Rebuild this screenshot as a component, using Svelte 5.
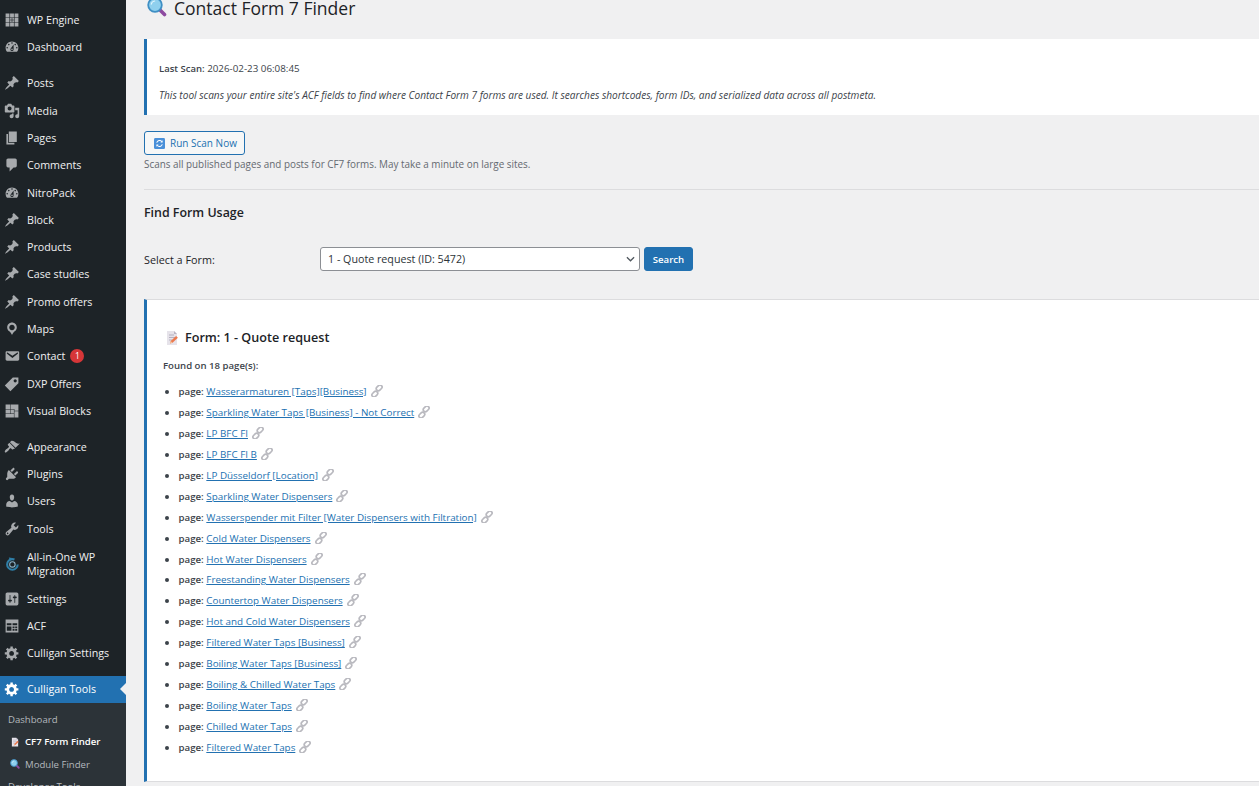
<script>
  const P = {
    pin: 'M10.44 3.02l1.82-1.82 6.36 6.35-1.83 1.82c-1.05-.68-2.48-.57-3.41.36l-.75.75c-.92.93-1.04 2.35-.35 3.41l-1.83 1.82-2.41-2.41-2.8 2.79c-.42.42-3.38 2.71-3.8 2.29s1.86-3.39 2.28-3.81l2.79-2.79L4.1 9.36l1.83-1.82c1.05.69 2.48.57 3.4-.36l.75-.75c.93-.92 1.05-2.35.36-3.41z',
    media: 'M13 11V4c0-.55-.45-1-1-1h-1.67L9 1H5L3.67 3H2c-.55 0-1 .45-1 1v7c0 .55.45 1 1 1h10c.55 0 1-.45 1-1zM7 4.5c1.38 0 2.5 1.12 2.5 2.5S8.38 9.5 7 9.5 4.5 8.38 4.5 7 5.62 4.5 7 4.5zM14 6h5v10.5c0 1.38-1.12 2.5-2.5 2.5S14 17.88 14 16.5s1.12-2.5 2.5-2.5c.17 0 .34.02.5.05V9h-3V6zm-4 8.05V13h2v3.5c0 1.38-1.12 2.5-2.5 2.5S7 17.88 7 16.5 8.12 14 9.5 14c.17 0 .34.02.5.05z',
    page: 'M6 15V2h10v13H6zm-1 1h8v2H3V5h2v11z',
    comment: 'M5 2h9c1.1 0 2 .9 2 2v7c0 1.1-.9 2-2 2h-2l-5 5v-5H5c-1.1 0-2-.9-2-2V4c0-1.1.9-2 2-2z',
    dash: 'M3.76 16h12.48c1.1-1.37 1.76-3.11 1.76-5 0-4.42-3.58-8-8-8s-8 3.58-8 8c0 1.89.66 3.63 1.76 5zM10 4c.55 0 1 .45 1 1s-.45 1-1 1-1-.45-1-1 .45-1 1-1zM6 6c.55 0 1 .45 1 1s-.45 1-1 1-1-.45-1-1 .45-1 1-1zm8 0c.55 0 1 .45 1 1s-.45 1-1 1-1-.45-1-1 .45-1 1-1zm-5.37 5.55L12 7v6c0 1.1-.9 2-2 2s-2-.9-2-2c0-.57.24-1.08.63-1.45zM4 10c.55 0 1 .45 1 1s-.45 1-1 1-1-.45-1-1 .45-1 1-1zm12 0c.55 0 1 .45 1 1s-.45 1-1 1-1-.45-1-1 .45-1 1-1zm-5 3c0-.55-.45-1-1-1s-1 .45-1 1 .45 1 1 1 1-.45 1-1z',
    loc: 'M10 2C6.69 2 4 4.69 4 8c0 2.02 1.17 3.71 2.53 4.89.43.37 1.18.96 1.85 1.83.74.97 1.41 2.01 1.62 2.71.21-.7.88-1.74 1.62-2.71.67-.87 1.42-1.46 1.85-1.83C14.83 11.71 16 10.02 16 8c0-3.31-2.69-6-6-6zm0 2.56c1.9 0 3.44 1.54 3.44 3.44S11.9 11.44 10 11.44 6.56 9.9 6.56 8 8.1 4.56 10 4.56z',
    mail: 'M3.87 4h13.25C18.37 4 19 4.59 19 5.79v8.42c0 1.19-.63 1.79-1.88 1.79H3.87c-1.25 0-1.88-.6-1.88-1.79V5.79c0-1.2.63-1.79 1.88-1.79zm6.62 8.6l6.74-5.53c.24-.2.43-.66.13-1.07-.29-.41-.82-.42-1.17-.17l-5.7 3.86L4.8 5.83c-.35-.25-.88-.24-1.17.17-.3.41-.11.87.13 1.07z',
    tag: 'M11 2h7v7L8 19l-7-7zm3 6c1.1 0 2-.9 2-2s-.9-2-2-2-2 .9-2 2 .9 2 2 2z',
    brush: 'M14.48 11.06L7.41 3.99l1.5-1.5c.5-.56 2.3-.47 3.51.32 1.21.8 1.43 1.28 2.91 2.1 1.18.64 2.45 1.26 4.45.85zm-.71.71L6.7 4.7 4.93 6.47c-.39.39-.39 1.02 0 1.41l1.06 1.06c.39.39.39 1.03 0 1.42-.6.6-1.43 1.11-2.21 1.69-.35.26-.7.53-1.01.84-1.34 1.34-2.37 2.92-1.58 3.71.79.76 2.37-.27 3.72-1.62.31-.31.58-.66.84-1.01.58-.78 1.09-1.61 1.69-2.21.39-.39 1.03-.39 1.42 0l1.06 1.06c.39.39 1.02.39 1.41 0z',
    plug: 'M13.11 4.36L9.87 7.6 8 5.73l3.24-3.24c.35-.34 1.05-.2 1.56.32.52.51.66 1.21.31 1.55zm-8 1.77l.91-1.12 9.01 9.01-1.19.84c-.71.71-2.63 1.16-3.82 1.16H6.14L4.9 17.26c-.59.59-1.54.59-2.12 0-.59-.58-.59-1.53 0-2.12l1.24-1.24v-3.88c0-1.13.4-3.19 1.09-3.89zm7.26 3.97l3.24-3.24c.34-.35 1.04-.21 1.55.31.52.51.66 1.21.31 1.55l-3.24 3.25z',
    user: 'M10 9.25c-2.27 0-2.73-3.44-2.73-3.44C7 4.02 7.82 2 9.97 2c2.16 0 2.98 2.02 2.71 3.81 0 0-.41 3.44-2.68 3.44zm0 2.57L12.72 10c2.39 0 4.52 2.33 4.52 4.53v2.49s-3.65 1.13-7.24 1.13c-3.65 0-7.24-1.13-7.24-1.13v-2.49c0-2.25 1.94-4.48 4.47-4.48z',
    tool: 'M16.68 9.77c-1.34 1.34-3.3 1.67-4.95.99l-5.41 6.52c-.99.99-2.59.99-3.58 0s-.99-2.59 0-3.57l6.52-5.42c-.68-1.65-.35-3.61.99-4.95 1.28-1.28 3.12-1.62 4.72-1.06l-2.89 2.89 2.82 2.82 2.86-2.87c.53 1.58.18 3.39-1.08 4.67zM3.81 16.21c.4.39 1.04.39 1.43 0 .4-.4.4-1.04 0-1.43-.39-.4-1.03-.4-1.43 0-.39.39-.39 1.03 0 1.43z',
    set: 'M18 16V4c0-1.1-.9-2-2-2H4c-1.1 0-2 .9-2 2v12c0 1.1.9 2 2 2h12c1.1 0 2-.9 2-2zM8 11h1c.55 0 1 .45 1 1s-.45 1-1 1H8v1.5c0 .28-.22.5-.5.5s-.5-.22-.5-.5V13H6c-.55 0-1-.45-1-1s.45-1 1-1h1V5.5c0-.28.22-.5.5-.5s.5.22.5.5V11zm5-2h-1c-.55 0-1-.45-1-1s.45-1 1-1h1V5.5c0-.28.22-.5.5-.5s.5.22.5.5V7h1c.55 0 1 .45 1 1s-.45 1-1 1h-1v5.5c0 .28-.22.5-.5.5s-.5-.22-.5-.5V9z',
    gear: 'M18 12h-2.18c-.17.7-.44 1.35-.81 1.93l1.54 1.54-2.1 2.1-1.54-1.54c-.58.36-1.23.63-1.91.79V19H8v-2.18c-.68-.16-1.33-.43-1.91-.79l-1.54 1.54-2.12-2.12 1.54-1.54c-.36-.58-.63-1.23-.79-1.91H1V9.03h2.17c.16-.7.44-1.35.8-1.94L2.43 5.55l2.1-2.1 1.54 1.54c.58-.37 1.24-.64 1.93-.81V2h3v2.18c.68.16 1.33.43 1.91.79l1.54-1.54 2.12 2.12-1.54 1.54c.36.59.64 1.24.8 1.94H18V12zm-8.5 1.5c1.66 0 3-1.34 3-3s-1.34-3-3-3-3 1.34-3 3 1.34 3 3 3z',
    wpe: 'M2 2h4.8v4.8H2zM7.6 2h4.8v4.8H7.6zM13.2 2H18v4.8h-4.8zM2 7.6h4.8v4.8H2zM13.2 7.6H18v4.8h-4.8zM2 13.2h4.8V18H2zM7.6 13.2h4.8V18H7.6zM13.2 13.2H18V18h-4.8zM7.6 7.6h2v2h-2zM10.4 7.6h2v2h-2zM7.6 10.4h2v2h-2zM10.4 10.4h2v2h-2z',
    blocks: 'M2 2h5.6v5.6H2zM8.2 2H18v7.6h-5V7.6H8.2zM2 8.2h5.6v5H2zM8.2 8.2h4.2v5H8.2zM13 10.2h5V18h-5zM2 13.8h10.4V18H2z',
    acf: 'M2 2h16v16H2zM3.5 6.5v2.6h5.8V6.5zM10.7 6.5v2.6h5.8V6.5zM3.5 10.5v5.5h5.8v-5.5zM10.7 10.5v2.2h2.5v-2.2zM14 10.5v2.2h2.5v-2.2zM10.7 13.8V16h2.5v-2.2zM14 13.8V16h2.5v-2.2z'
  };

  const groups = [
    [['WP Engine','wpe'],['Dashboard','dash']],
    [['Posts','pin'],['Media','media'],['Pages','page'],['Comments','comment'],['NitroPack','dash'],['Block','pin'],['Products','pin'],['Case studies','pin'],['Promo offers','pin'],['Maps','loc'],['Contact','mail',1],['DXP Offers','tag'],['Visual Blocks','blocks']],
    [['Appearance','brush'],['Plugins','plug'],['Users','user'],['Tools','tool'],['All-in-One WP Migration','aio'],['Settings','set'],['ACF','acf'],['Culligan Settings','gear']]
  ];

  const pages = [
    ['Wasserarmaturen [Taps][Business]'],['Sparkling Water Taps [Business] - Not Correct'],['LP BFC FI'],['LP BFC FI B'],['LP Düsseldorf [Location]'],['Sparkling Water Dispensers'],['Wasserspender mit Filter [Water Dispensers with Filtration]'],['Cold Water Dispensers'],['Hot Water Dispensers'],['Freestanding Water Dispensers'],['Countertop Water Dispensers'],['Hot and Cold Water Dispensers'],['Filtered Water Taps [Business]'],['Boiling Water Taps [Business]'],['Boiling & Chilled Water Taps'],['Boiling Water Taps'],['Chilled Water Taps'],['Filtered Water Taps']
  ];
</script>

{#snippet memo(cls)}
  <svg class={cls} viewBox="0 0 16 16" aria-hidden="true">
    <path d="M3 1h7l3 3v11H3z" fill="#e6e3ea"/><path d="M10 1l3 3h-3z" fill="#b9b4c2"/>
    <path d="M5 5h5M5 7.5h6M5 10h3" stroke="#a9a5b5" stroke-width=".8"/>
    <path d="M6 13.4l.7-2.4 5.4-5 1.8 1.8-5.4 5z" fill="#ec7a4e"/><path d="M6 13.4l.7-2.4 1.7 1.7z" fill="#f6c8a0"/>
  </svg>
{/snippet}

{#snippet lens(cls)}
  <svg class={cls} viewBox="0 0 20 20" aria-hidden="true">
    <path d="M12.5 12.5l5 5" stroke="#8d4aa0" stroke-width="3.6" stroke-linecap="round"/>
    <circle cx="8" cy="8" r="6.8" fill="#8fd0ee" stroke="#3f8fc4" stroke-width="1.8"/>
    <path d="M4.3 7.2A4 4 0 0 1 7.6 4" stroke="#dff4fd" stroke-width="1.2" fill="none" stroke-linecap="round"/>
  </svg>
{/snippet}

<div class="root">
  <nav class="side">
    {#each groups as g}
      <ul class="group">
        {#each g as [label, icon, badge]}
          <li class="item" class:tall={icon === 'aio'}>
            {#if icon === 'aio'}
              <svg class="ico" viewBox="0 0 20 20" aria-hidden="true">
                <circle cx="10.5" cy="10.5" r="6.6" fill="none" stroke="#2f7fa8" stroke-width="2.6" stroke-dasharray="33 10"/>
                <circle cx="10.5" cy="10.5" r="3.4" fill="none" stroke="#8fb7cc" stroke-width="1.3"/>
                <path d="M6 1.8l4.2.8-2.6 3.4z" fill="#2f7fa8"/>
              </svg>
            {:else}
              <svg class="ico" viewBox="0 0 20 20" aria-hidden="true"><path d={P[icon]} fill-rule="evenodd"/></svg>
            {/if}
            <span class="lbl">{label}</span>
            {#if badge}<span class="badge">{badge}</span>{/if}
          </li>
        {/each}
      </ul>
    {/each}
    <div class="active">
      <svg class="ico" viewBox="0 0 20 20" aria-hidden="true"><path d={P.gear} fill-rule="evenodd"/></svg>
      <span class="lbl">Culligan Tools</span>
    </div>
    <ul class="sub">
      <li class="subhead">Dashboard</li>
      <li class="subitem cur">{@render memo('subico')}CF7 Form Finder</li>
      <li class="subitem">{@render lens('subico')}Module Finder</li>
      <li class="subhead">Developer Tools</li>
    </ul>
  </nav>

  <main class="main">
    <h1>{@render lens('h1ico')}<span>Contact Form 7 Finder</span></h1>

    <section class="notice">
      <p class="scan"><strong>Last Scan:</strong> 2026-02-23 06:08:45</p>
      <p class="desc">This tool scans your entire site's ACF fields to find where Contact Form 7 forms are used. It searches shortcodes, form IDs, and serialized data across all postmeta.</p>
    </section>

    <button class="run">
      <svg class="runico" viewBox="0 0 12 12" aria-hidden="true">
        <rect width="12" height="12" rx="1.5" fill="#4a90d9"/>
        <path d="M3 5.2A3.1 3.1 0 0 1 8.6 4M9 6.8A3.1 3.1 0 0 1 3.4 8" fill="none" stroke="#fff" stroke-width="1.1"/>
        <path d="M9.4 2.4v2.4H7zM2.6 9.6V7.2H5z" fill="#fff"/>
      </svg>
      Run Scan Now
    </button>
    <p class="help">Scans all published pages and posts for CF7 forms. May take a minute on large sites.</p>

    <hr />

    <h2>Find Form Usage</h2>

    <form class="row" onsubmit={(e) => e.preventDefault()}>
      <label for="form-select">Select a Form:</label>
      <select id="form-select"><option>1 - Quote request (ID: 5472)</option></select>
      <button class="search" type="submit">Search</button>
    </form>

    <section class="result">
      <h3>{@render memo('h3ico')}Form: 1 - Quote request</h3>
      <p class="found"><strong>Found on 18 page(s):</strong></p>
      <ul class="list">
        {#each pages as [name]}
          <li>
            <strong>page:</strong> <a href="#top" onclick={(e) => e.preventDefault()}>{name}</a>
            <svg class="link" viewBox="0 0 16 16" aria-hidden="true">
              <g fill="none" stroke="#b9b9bf" stroke-width="2.2">
                <rect x="6.6" y="1" width="8.6" height="5.6" rx="2.8" transform="rotate(-45 10.9 3.8)"/>
                <rect x="0.8" y="9.4" width="8.6" height="5.6" rx="2.8" transform="rotate(-45 5.1 12.2)"/>
              </g>
            </svg>
          </li>
        {/each}
      </ul>
    </section>
  </main>
</div>

<style>
  :global(body) { margin: 0; background: #f0f0f1; }
  :global(html, body) { overflow: hidden; }
  .root {
    display: grid;
    grid-template-columns: 126px 1fr;
    height: 786px;
    overflow: hidden;
    font-family: "Open Sans", "Noto Sans", sans-serif;
    font-size: 10px;
    color: #3c434a;
    background: #f0f0f1;
  }
  ul { list-style: none; margin: 0; padding: 0; }
  p { margin: 0; }

  .side { background: #1d2327; color: #f0f0f1; padding-top: 6.5px; overflow: hidden; }
  .group { margin-bottom: 8.6px; }
  .item, .active {
    display: flex;
    align-items: center;
    height: 27.3px;
    font-size: 10.7px;
    line-height: 14px;
  }
  .item.tall { height: 42.7px; }
  .ico { width: 16px; height: 16px; margin: 0 7px 0 4px; flex: none; fill: #a7aaad; }
  .lbl { flex: 0 1 auto; }
  .badge {
    width: 14px; height: 14px; margin-left: 5px; border-radius: 50%;
    background: #d63638; color: #fff; font-size: 8.5px; line-height: 14px; text-align: center;
  }
  .active { position: relative; background: #2271b1; color: #fff; }
  .active .ico { fill: #fff; }
  .active::after {
    content: ""; position: absolute; right: 0; top: 50%; margin-top: -6px;
    border: 6px solid transparent; border-right-color: #f0f0f1; border-left-width: 0;
  }
  .sub { background: #2c3338; padding-top: 5px; }
  .subhead, .subitem { display: flex; align-items: center; height: 22.5px; font-size: 9.6px; color: #b4b9be; }
  .subhead { padding-left: 8px; }
  .subitem { padding-left: 10px; }
  .subitem.cur { color: #fff; font-weight: 600; }
  .subico { width: 10px; height: 10px; margin-right: 5px; flex: none; }

  .main { padding-left: 18px; min-width: 0; }
  h1 {
    display: flex; align-items: flex-start; gap: 7px;
    margin: 0; height: 39px;
    font-size: 17.5px; font-weight: 400; line-height: 17px; color: #1d2327;
  }
  .h1ico { width: 20px; height: 20px; margin: -3px 0 0 3px; flex: none; }
  .notice {
    height: 76px; box-sizing: border-box;
    padding: 24px 0 0 12px;
    background: #fff; border-left: 3px solid #2271b1;
    font-size: 9.8px; color: #3c434a;
  }
  .scan { line-height: 12px; height: 26px; }
  .scan strong { font-weight: 600; font-size: 9.5px; }
  .desc { font-style: italic; font-size: 10.1px; line-height: 12px; white-space: nowrap; }
  .run {
    display: flex; align-items: center; gap: 5px;
    margin-top: 16px; width: 101px; height: 24px; box-sizing: border-box; padding: 0 0 0 9px;
    background: #f6f7f7; border: 1px solid #2271b1; border-radius: 3px;
    color: #2271b1; font: inherit; font-size: 10px; white-space: nowrap;
  }
  .runico { width: 11px; height: 11px; flex: none; }
  .help { margin-top: 3px; height: 19px; line-height: 13px; font-size: 9.9px; color: #646970; }
  hr { border: 0; border-top: 1px solid #dcdcde; height: 0; margin: 12px 0 0; }
  h2 { margin: 14px 0 0; height: 17px; font-size: 12.4px; line-height: 17px; font-weight: 600; color: #1d2327; }
  .row { display: flex; align-items: center; margin-top: 26px; height: 24px; }
  .row label { width: 176px; flex: none; font-size: 10.8px; color: #1d2327; }
  select {
    appearance: none; width: 320px; height: 24px; box-sizing: border-box; padding: 0 20px 0 7px;
    background: #fff url("data:image/svg+xml,%3Csvg xmlns='http://www.w3.org/2000/svg' viewBox='0 0 10 6'%3E%3Cpath d='M1 1l4 4 4-4' fill='none' stroke='%2350575e' stroke-width='1.4'/%3E%3C/svg%3E") no-repeat right 4px center / 9px 6px;
    border: 1px solid #8c8f94; border-radius: 3px;
    color: #2c3338; font: inherit; font-size: 10.7px;
  }
  .search {
    margin-left: 4px; width: 49px; height: 24px; padding: 0;
    background: #2271b1; border: 1px solid #2271b1; border-radius: 3px;
    color: #fff; font: inherit; font-size: 9.6px; font-weight: 600;
  }
  .result {
    margin-top: 28px; height: 483px; box-sizing: border-box;
    padding: 29px 0 0 16px;
    background: #fff; border-left: 3px solid #2271b1;
    border-top: 1px solid #dcdcde; border-bottom: 1px solid #dcdcde;
  }
  h3 {
    display: flex; align-items: center; gap: 5px;
    margin: 0; height: 18px; font-size: 12.6px; line-height: 18px; font-weight: 600; color: #1d2327;
  }
  .h3ico { width: 16px; height: 16px; margin-left: 1px; flex: none; }
  .found { margin-top: 12px; height: 24px; line-height: 13px; font-size: 9.6px; }
  .found strong { font-weight: 600; }
  .list { list-style: disc; padding-left: 15.5px; margin-top: 2px; }
  .list li { height: 20.95px; line-height: 12px; font-size: 9.85px; white-space: nowrap; }
  .list li::marker { color: #3c434a; font-size: 10px; }
  .list strong { font-weight: 600; font-size: 9.7px; }
  .list a { color: #2271b1; }
  .link { width: 12px; height: 12px; margin-left: 1.5px; vertical-align: -2px; }
</style>
